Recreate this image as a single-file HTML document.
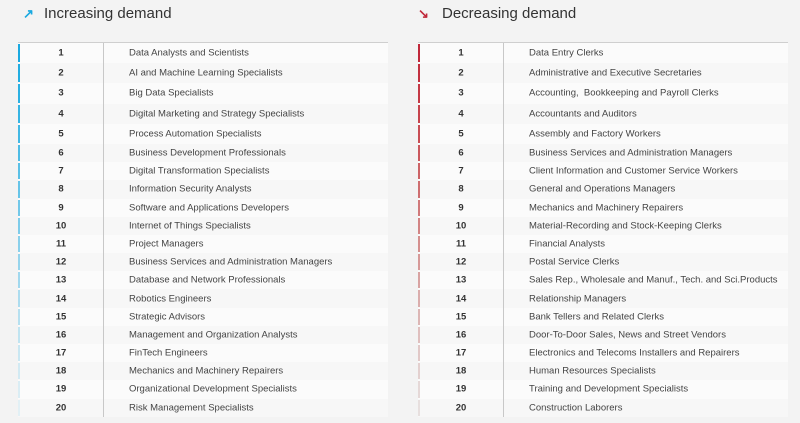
<!DOCTYPE html>
<html><head><meta charset="utf-8"><style>
*{margin:0;padding:0;box-sizing:border-box}
body{width:800px;height:423px;background:#f3f3f3;font-family:"Liberation Sans",Arial,sans-serif;position:relative;overflow:hidden}
.h{position:absolute;top:5px;font-size:15px;color:#333;}
.h .a{position:absolute;font-size:13px;font-weight:bold;top:1px}
.t{position:absolute;top:42px;width:370px;border-top:1px solid #cfcfcf;background:#f7f7f7}
.r{position:relative;height:18.2px;font-size:9.5px;color:#444;background:#f7f7f7}
.r.b{height:20.2px}
.r:nth-child(even){background:#fbfbfb}
.r i{position:absolute;left:0;top:1px;bottom:1px;width:2px}
.r span{position:absolute;top:50%;transform:translateY(-50%)}
.n{left:0;width:86px;text-align:center;font-weight:bold;color:#333}
.x{left:111px;white-space:nowrap}
.d{position:absolute;left:85px;top:0;bottom:0;width:1px;background:#c8c8c8;z-index:2}
</style></head><body>
<div class="h" style="left:44px"><span class="a" style="left:-21px;color:#1aa9e0">↗</span>Increasing demand</div>
<div class="h" style="left:442px"><span class="a" style="left:-24px;color:#c0283a">↘</span>Decreasing demand</div>

<div class="t" style="left:18px">
<div class="d"></div>
<div class="r b"><i style="background:#1aa9e0"></i><span class="n">1</span><span class="x">Data Analysts and Scientists</span></div>
<div class="r b"><i style="background:#22ade1"></i><span class="n">2</span><span class="x">AI and Machine Learning Specialists</span></div>
<div class="r b"><i style="background:#2bb0e2"></i><span class="n">3</span><span class="x">Big Data Specialists</span></div>
<div class="r b"><i style="background:#36b4e3"></i><span class="n">4</span><span class="x">Digital Marketing and Strategy Specialists</span></div>
<div class="r b"><i style="background:#42b8e4"></i><span class="n">5</span><span class="x">Process Automation Specialists</span></div>
<div class="r"><i style="background:#4ebce5"></i><span class="n">6</span><span class="x">Business Development Professionals</span></div>
<div class="r"><i style="background:#5ac0e6"></i><span class="n">7</span><span class="x">Digital Transformation Specialists</span></div>
<div class="r"><i style="background:#66c4e8"></i><span class="n">8</span><span class="x">Information Security Analysts</span></div>
<div class="r"><i style="background:#72c8e9"></i><span class="n">9</span><span class="x">Software and Applications Developers</span></div>
<div class="r"><i style="background:#7eccea"></i><span class="n">10</span><span class="x">Internet of Things Specialists</span></div>
<div class="r"><i style="background:#8ad0eb"></i><span class="n">11</span><span class="x">Project Managers</span></div>
<div class="r"><i style="background:#96d4ec"></i><span class="n">12</span><span class="x">Business Services and Administration Managers</span></div>
<div class="r"><i style="background:#a1d8ee"></i><span class="n">13</span><span class="x">Database and Network Professionals</span></div>
<div class="r"><i style="background:#acdcef"></i><span class="n">14</span><span class="x">Robotics Engineers</span></div>
<div class="r"><i style="background:#b6e0f0"></i><span class="n">15</span><span class="x">Strategic Advisors</span></div>
<div class="r"><i style="background:#c0e4f1"></i><span class="n">16</span><span class="x">Management and Organization Analysts</span></div>
<div class="r"><i style="background:#c9e7f2"></i><span class="n">17</span><span class="x">FinTech Engineers</span></div>
<div class="r"><i style="background:#d2eaf3"></i><span class="n">18</span><span class="x">Mechanics and Machinery Repairers</span></div>
<div class="r"><i style="background:#daedf4"></i><span class="n">19</span><span class="x">Organizational Development Specialists</span></div>
<div class="r"><i style="background:#e2f0f5"></i><span class="n">20</span><span class="x">Risk Management Specialists</span></div>
</div>

<div class="t" style="left:418px">
<div class="d"></div>
<div class="r b"><i style="background:#c0283a"></i><span class="n">1</span><span class="x">Data Entry Clerks</span></div>
<div class="r b"><i style="background:#c2303f"></i><span class="n">2</span><span class="x">Administrative and Executive Secretaries</span></div>
<div class="r b"><i style="background:#c43945"></i><span class="n">3</span><span class="x">Accounting,&nbsp; Bookkeeping and Payroll Clerks</span></div>
<div class="r b"><i style="background:#c6434c"></i><span class="n">4</span><span class="x">Accountants and Auditors</span></div>
<div class="r b"><i style="background:#c84d54"></i><span class="n">5</span><span class="x">Assembly and Factory Workers</span></div>
<div class="r"><i style="background:#ca585d"></i><span class="n">6</span><span class="x">Business Services and Administration Managers</span></div>
<div class="r"><i style="background:#cc6366"></i><span class="n">7</span><span class="x">Client Information and Customer Service Workers</span></div>
<div class="r"><i style="background:#ce6e70"></i><span class="n">8</span><span class="x">General and Operations Managers</span></div>
<div class="r"><i style="background:#d0797a"></i><span class="n">9</span><span class="x">Mechanics and Machinery Repairers</span></div>
<div class="r"><i style="background:#d28484"></i><span class="n">10</span><span class="x">Material-Recording and Stock-Keeping Clerks</span></div>
<div class="r"><i style="background:#d48f8e"></i><span class="n">11</span><span class="x">Financial Analysts</span></div>
<div class="r"><i style="background:#d69998"></i><span class="n">12</span><span class="x">Postal Service Clerks</span></div>
<div class="r"><i style="background:#d8a3a2"></i><span class="n">13</span><span class="x">Sales Rep., Wholesale and Manuf., Tech. and Sci.Products</span></div>
<div class="r"><i style="background:#daadac"></i><span class="n">14</span><span class="x">Relationship Managers</span></div>
<div class="r"><i style="background:#dcb6b5"></i><span class="n">15</span><span class="x">Bank Tellers and Related Clerks</span></div>
<div class="r"><i style="background:#dfbfbe"></i><span class="n">16</span><span class="x">Door-To-Door Sales, News and Street Vendors</span></div>
<div class="r"><i style="background:#e1c8c7"></i><span class="n">17</span><span class="x">Electronics and Telecoms Installers and Repairers</span></div>
<div class="r"><i style="background:#e3d0cf"></i><span class="n">18</span><span class="x">Human Resources Specialists</span></div>
<div class="r"><i style="background:#e5d8d7"></i><span class="n">19</span><span class="x">Training and Development Specialists</span></div>
<div class="r"><i style="background:#e7dfde"></i><span class="n">20</span><span class="x">Construction Laborers</span></div>
</div>
</body></html>
